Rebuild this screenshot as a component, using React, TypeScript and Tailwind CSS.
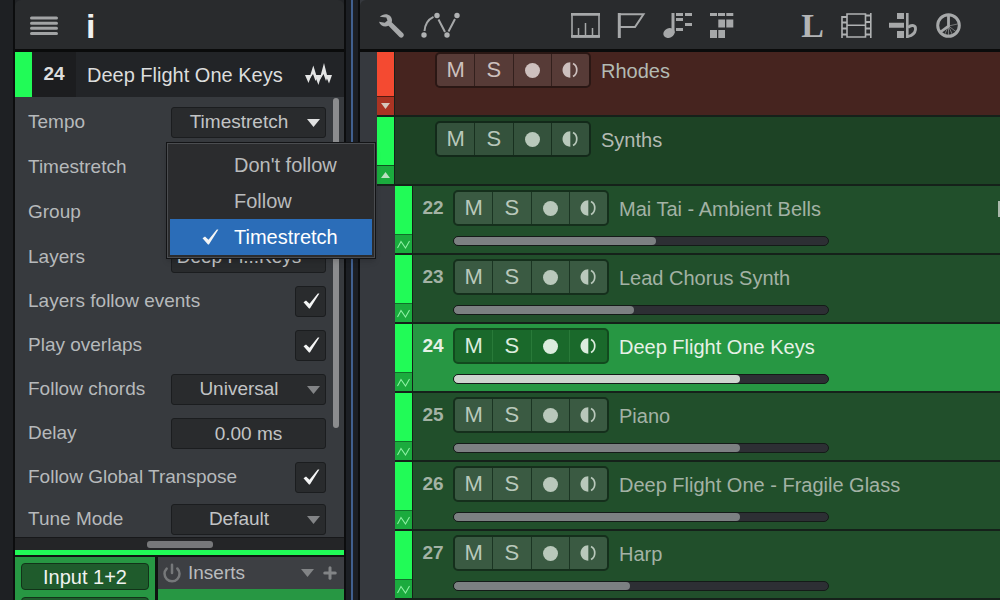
import { useState, type ReactNode } from 'react';
import { Plus, Power } from 'lucide-react';
import clsx from 'clsx';

type Track = {
  id: number;
  name: string;
  level: number;
};

const TEMPO_MODES = ["Don't follow", 'Follow', 'Timestretch'];

const TRACKS: Track[] = [
  { id: 22, name: 'Mai Tai - Ambient Bells', level: 53 },
  { id: 23, name: 'Lead Chorus Synth', level: 47 },
  { id: 24, name: 'Deep Flight One Keys', level: 76 },
  { id: 25, name: 'Piano', level: 76 },
  { id: 26, name: 'Deep Flight One - Fragile Glass', level: 76 },
  { id: 27, name: 'Harp', level: 46 },
];

/* ---------- Icons ---------- */

function MenuIcon() {
  return (
    <svg width="28" height="20" viewBox="0 0 28 20" stroke="#a2a4a5" strokeWidth="3" strokeLinecap="round">
      <path d="M1.5 2h25M1.5 7.2h25M1.5 12.3h25M1.5 17.4h25" />
    </svg>
  );
}

function WaveIcon() {
  return (
    <svg width="28" height="24" viewBox="0 0 28 24" fill="#e4e5e5">
      <path d="M0 12h6.500L3.500 20z" />
      <path d="M3.600 17.500L8.300 2.500l3.700 12-1.500 3.500-2.500-7z" />
      <path d="M9.500 12h6.800l-2.800 10z" />
      <path d="M14 18.500L19 0l3.500 14-1.500 4-2.500-7z" />
      <path d="M20.500 12H27l-3 8.500z" />
    </svg>
  );
}

function WrenchIcon() {
  return (
    <svg width="25" height="25" viewBox="0 0 25 25" fill="#a6a8a9">
      <path d="M.8 3.800C5-.8 12.800.8 13 7.300c0 .8-.1 1.400-.3 2l11.400 11c2.200 2.500-1.100 5.900-3.600 3.700L9.500 12.800C5.800 14.600 1.200 13 0 8.800l5.800 1L8.500 7.500 7.300 4.600z" />
    </svg>
  );
}

function CurveIcon() {
  return (
    <svg width="39" height="27" viewBox="0 0 39 27" fill="none" stroke="#a6a8a9" strokeWidth="2">
      <path d="M3.500 19C4 12 8 7 12.500 4.800M17.500 7.500l6.500 12.500M27.500 19.500l6.500-12.500" />
      <g fill="#b0b2b3" stroke="none">
        <circle cx="3" cy="23" r="2.700" />
        <circle cx="16" cy="3.500" r="2.700" />
        <circle cx="26" cy="23" r="2.700" />
        <circle cx="36" cy="3.500" r="2.700" />
      </g>
    </svg>
  );
}

function RulerIcon() {
  return (
    <svg width="29" height="25" viewBox="0 0 29 25" fill="none" stroke="#a6a8a9">
      <rect x="1" y="1" width="27" height="23" strokeWidth="1.600" />
      <path d="M0 1.400h29M0 23.300h29" strokeWidth="2.600" />
      <path d="M7.500 22v-7M14.500 22V10M21.500 22v-7" strokeWidth="1.500" />
    </svg>
  );
}

function FlagIcon() {
  return (
    <svg width="29" height="25" viewBox="0 0 29 25" fill="none" stroke="#a6a8a9">
      <path d="M2.300 0v25" strokeWidth="3" />
      <path d="M2 1.200h24.500L18 14H2" strokeWidth="2" />
    </svg>
  );
}

function NoteIcon() {
  return (
    <svg width="30" height="25" viewBox="0 0 30 25" fill="#a6a8a9">
      <path d="M8.500 0h3v20h-3z" />
      <ellipse cx="6" cy="20" rx="5.800" ry="4.800" transform="rotate(-25 6 20)" />
      <path d="M13 0h7v3h-7zM22 0h7v3h-7zM13 5h7v3h-7zM22 10h7v3h-7zM13 15h7v3h-7z" />
    </svg>
  );
}

function GridIcon() {
  return (
    <svg width="24" height="25" viewBox="0 0 24 25" fill="#a6a8a9">
      <path d="M0 0h7v3H0zM8 0h7v3H8zM16.300 0h7v3h-7zM8.300 6.500h6.700v8H8.300zM16.300 6.500h7v8h-7zM0 17h7v8H0zM8.300 17h6.700v8H8.300z" />
    </svg>
  );
}

function FilmIcon() {
  return (
    <svg width="31" height="25" viewBox="0 0 31 25" fill="none" stroke="#b0b2b3" strokeWidth="1.600">
      <path d="M6 1h18.500v23H6zM6 12.300h18.500" />
      <path d="M1 3v22M29.800 0v25" />
      <path d="M1 4h5M1 9.500h5M1 15.500h5M1 21.500h5M24.500 2.500h5M24.500 9h5M24.500 15.500h5M24.500 21.500h5" strokeWidth="2.200" />
    </svg>
  );
}

function FlatIcon() {
  return (
    <svg width="30" height="25" viewBox="0 0 30 25" fill="#a6a8a9">
      <path d="M8 0h7v6H8zM0 9.700h15v5H0zM8 18h7v7H8zM17 0h2.600v25H17z" />
      <path d="M19 14.500c4-3.500 8-2 7.500 2-.4 3.500-3.500 6-7.500 7" fill="none" stroke="#a6a8a9" strokeWidth="2.800" />
    </svg>
  );
}

function WheelIcon() {
  return (
    <svg width="25" height="25" viewBox="0 0 25 25" fill="none" stroke="#a6a8a9">
      <circle cx="12.500" cy="12.500" r="10.800" strokeWidth="3" />
      <path d="M12.500 2v11L4.500 19" strokeWidth="2.800" />
      <path d="M12.500 13l8 6M12.500 13l9-2M12.500 13v10M12.500 13l-4 9M12.500 13l4 9" strokeWidth="1" opacity="0.6" />
    </svg>
  );
}

function MonitorIcon() {
  return (
    <svg width="16" height="16" viewBox="0 0 16 16">
      <path d="M8.300 .3v15.400C4 15.700 .5 12.300 .5 8S4 .3 8.300 .3z" fill="currentColor" />
      <path d="M11 1.500c5 2.500 5 10.500 0 13" fill="none" stroke="currentColor" strokeWidth="1.700" />
    </svg>
  );
}

function CheckIcon({ className }: { className?: string }) {
  return (
    <svg width="17" height="16" viewBox="0 0 17 16" className={className} fill="#f4f5f5">
      <path d="M.5 9.300L3 7.400l3.500 3.300L14.800.6h1.600L6.900 15.400H6z" />
    </svg>
  );
}

function Triangle({ className }: { className?: string }) {
  return (
    <svg width="13" height="8" viewBox="0 0 13 8" className={className} fill="currentColor">
      <path d="M0 0h13L6.500 8z" />
    </svg>
  );
}

/* ---------- Inspector ---------- */

const BOX = 'rounded-[3px] border border-[#1b1d1f] bg-[#292b2d]';

function Field({ label, id, children }: { label: string; id?: string; children?: ReactNode }) {
  return (
    <div className="flex h-[31px] items-center justify-between">
      <label htmlFor={id}>{label}</label>
      {children}
    </div>
  );
}

function SelectBox({ id, options, value, active, arrow = true, onChange }: {
  id: string;
  options: string[];
  value?: string;
  active?: boolean;
  arrow?: boolean;
  onChange?: (value: string) => void;
}) {
  return (
    <div className="relative w-[155px]">
      <select
        id={id}
        value={value ?? options[0]}
        onChange={(e) => onChange?.(e.target.value)}
        className={clsx(BOX, 'block h-[31px] w-full appearance-none pr-[19px] text-center text-[#c2c4c5] outline-none')}
      >
        {options.map((option) => (
          <option key={option}>{option}</option>
        ))}
      </select>
      {arrow && (
        <Triangle
          className={clsx('pointer-events-none absolute top-3 right-1.5', active ? 'text-[#e0e1e1]' : 'text-[#828486]')}
        />
      )}
    </div>
  );
}

function CheckBox({ id }: { id: string }) {
  const [checked, setChecked] = useState(true);

  return (
    <div className="relative size-[31px]">
      <input
        id={id}
        type="checkbox"
        checked={checked}
        onChange={(e) => setChecked(e.target.checked)}
        className={clsx(BOX, 'block size-full appearance-none')}
      />
      {checked && <CheckIcon className="pointer-events-none absolute top-[7px] left-[8px]" />}
    </div>
  );
}

function TempoMenu({ value, onSelect }: { value: string; onSelect: (value: string) => void }) {
  return (
    <ul
      role="listbox"
      aria-label="Tempo"
      className="absolute top-[35px] -left-[5px] z-10 w-[210px] border border-[#131416] bg-[#2b2c2e] px-[3px] pt-1 pb-[3px] text-[20px] text-[#b9bbbc] shadow-md inset-ring inset-ring-[#4b4d50]"
    >
      {TEMPO_MODES.map((mode) => (
        <li key={mode} role="option" aria-selected={mode === value}>
          <button
            type="button"
            onClick={() => onSelect(mode)}
            className={clsx(
              'flex h-9 w-full items-center pl-8 text-left whitespace-nowrap',
              mode === value && 'bg-[#2b6db8] text-white',
            )}
          >
            <span className="w-8">{mode === value && <CheckIcon />}</span>
            {mode}
          </button>
        </li>
      ))}
    </ul>
  );
}

function Inspector() {
  const [tempo, setTempo] = useState('Timestretch');

  return (
    <aside className="flex w-[333px] shrink-0 flex-col border-x-2 border-[#0c0d0e] bg-[#222427]">
      <div className="flex h-[52px] shrink-0 items-center gap-7 rounded-t-md border-b-[3px] border-[#0a0b0b] bg-[#292b2d] pt-[2px] pl-[15px]">
        <button type="button" aria-label="Menu">
          <MenuIcon />
        </button>
        <button type="button" className="text-[34px] leading-none font-bold text-[#f0f1f1]">
          i
        </button>
      </div>

      <div className="flex h-[45px] shrink-0 items-center text-[20px] text-[#dcdddd]">
        <span className="h-full w-[17px] bg-[#21fb57]" />
        <span className="flex h-full w-11 items-center justify-center bg-[#1c1d1f] text-[19px] font-bold">24</span>
        <h2 className="flex-1 pl-[11px] whitespace-nowrap">Deep Flight One Keys</h2>
        <span className="pr-[11px]">
          <WaveIcon />
        </span>
      </div>

      <div className="flex shrink-0 bg-[#373a3e] pb-[2px] text-[19px] text-[#b6b9bb]">
        <form className="flex flex-1 flex-col gap-[13px] pt-[10px] pl-[13px]">
          <div className="flex flex-col gap-[14px]">
            <Field label="Tempo" id="tempo">
              <div className="relative">
                <SelectBox id="tempo" options={TEMPO_MODES} value={tempo} active onChange={setTempo} />
                <TempoMenu value={tempo} onSelect={setTempo} />
              </div>
            </Field>
            <Field label="Timestretch" />
            <Field label="Group" />
            <Field label="Layers" id="layers">
              <SelectBox id="layers" options={['Deep Fl...Keys']} arrow={false} />
            </Field>
          </div>
          <Field label="Layers follow events" id="layers-follow">
            <CheckBox id="layers-follow" />
          </Field>
          <Field label="Play overlaps" id="overlaps">
            <CheckBox id="overlaps" />
          </Field>
          <Field label="Follow chords" id="chords">
            <SelectBox id="chords" options={['Universal']} />
          </Field>
          <Field label="Delay" id="delay">
            <input
              id="delay"
              defaultValue="0.00 ms"
              className={clsx(BOX, 'h-[31px] w-[155px] text-center text-[#c2c4c5] outline-none')}
            />
          </Field>
          <div className="flex flex-col gap-[11px]">
            <Field label="Follow Global Transpose" id="transpose">
              <CheckBox id="transpose" />
            </Field>
            <Field label="Tune Mode" id="tune">
              <SelectBox id="tune" options={['Default']} />
            </Field>
          </div>
        </form>
        <div className="w-[18px] pt-px pl-[7px]">
          <div className="h-[330px] w-[6px] rounded-full bg-[#8b8c8e]" />
        </div>
      </div>

      <div className="flex h-[13px] shrink-0 items-center justify-center border-t border-[#17181a] bg-[#242527]">
        <div className="h-[7px] w-[66px] rounded-[3px] bg-[#77787a]" />
      </div>
      <div className="h-[7px] shrink-0 border-b-2 border-[#111513] bg-[#21fb57]" />

      <div className="flex min-h-0 flex-1 overflow-hidden bg-[#0e1210] text-[#f0f2f0]">
        <div className="mr-[3px] flex w-[140px] flex-col gap-[7px] bg-[#279743] px-[6px] pt-[6px]">
          <button
            type="button"
            className="h-[27px] shrink-0 rounded border border-[#123319] bg-[#1f5b2c] text-[20px] leading-none"
          >
            Input 1+2
          </button>
          <button
            type="button"
            aria-label="Output"
            className="h-[27px] shrink-0 rounded border border-[#123319] bg-[#1f5b2c]"
          />
        </div>
        <div className="flex-1 bg-[#279743]">
          <div className="flex h-8 items-center bg-[#3d3f43] pr-[5px] pl-1 text-[19px] text-[#b9bbbd]">
            <button type="button" aria-label="Bypass inserts" className="text-[#76787a]">
              <Power size={20} strokeWidth={3} />
            </button>
            <span className="pl-1.5">Inserts</span>
            <button type="button" aria-label="Insert presets" className="ml-auto text-[#828486]">
              <Triangle />
            </button>
            <button type="button" aria-label="Add insert" className="pl-[7px] text-[#828486]">
              <Plus size={18} strokeWidth={4} />
            </button>
          </div>
        </div>
      </div>
    </aside>
  );
}

/* ---------- Track list ---------- */

function TrackButtons({ className }: { className: string }) {
  return (
    <div
      className={clsx(
        'flex h-9 w-[156px] shrink-0 divide-x rounded-[5px] border-2 text-[22px] leading-none *:flex *:flex-1 *:items-center *:justify-center',
        className,
      )}
    >
      <button type="button">M</button>
      <button type="button">S</button>
      <button type="button" aria-label="Record">
        <span className="size-[15px] rounded-full bg-current" />
      </button>
      <button type="button" aria-label="Monitor">
        <MonitorIcon />
      </button>
    </div>
  );
}

function FolderRow({ name, open, className, stripClass, footClass, buttonClass }: {
  name: string;
  open?: boolean;
  className: string;
  stripClass: string;
  footClass: string;
  buttonClass: string;
}) {
  return (
    <div className="flex h-[69px] shrink-0 pl-[17px]">
      <div className={clsx('flex w-[18px] flex-col border-r border-b-2 border-[#15211a]', stripClass)}>
        <button
          type="button"
          aria-label={open ? 'Close folder' : 'Open folder'}
          className={clsx('mt-auto flex h-[19px] items-center justify-center border-t border-black/50', footClass)}
        >
          <svg width="9" height="6" viewBox="0 0 9 6" fill="#e2ece2" opacity="0.8">
            <path d={open ? 'M0 6L4.500 0 9 6z' : 'M0 0h9L4.500 6z'} />
          </svg>
        </button>
      </div>
      <div className={clsx('flex flex-1 items-start gap-[10px] border-b-2 border-[#15211a] pt-1 pl-[40px]', className)}>
        <TrackButtons className={buttonClass} />
        <span className="leading-[38px] text-[#b3bab3]">{name}</span>
      </div>
    </div>
  );
}

function TrackRow({ track, selected, onSelect }: { track: Track; selected: boolean; onSelect: () => void }) {
  const [level, setLevel] = useState(track.level);
  const fill = selected ? '#ced5cf' : '#7c8082';
  const stop = `calc((100% - 8px) * ${level / 100} + 4px)`;

  return (
    <div className="flex h-[69px] shrink-0 pl-[35px]" onClick={onSelect}>
      <div className="flex w-[18px] flex-col border-r border-b-2 border-[#15211a] bg-[#21fb57]">
        <div className="mt-auto flex h-[19px] items-center justify-center border-t border-[#11702a] bg-[#1bab3e]">
          <svg width="13" height="9" viewBox="0 0 13 9" fill="none" stroke="#8df0a3" strokeWidth="1.100">
            <path d="M.5 8L4 1.500 8.500 8 12.500 1" />
          </svg>
        </div>
      </div>
      <div
        className={clsx(
          'flex flex-1 border-b-2 border-[#15211a] pt-1',
          selected ? 'bg-[#279743] text-[#e6f1e7]' : 'bg-[#214f2b] text-[#a3b2a5]',
        )}
      >
        <span className="w-10 text-center text-[19px] leading-9 font-bold">{track.id}</span>
        <div className="flex flex-col gap-[10px]">
          <div className="flex h-9 gap-[10px]">
            <TrackButtons
              className={
                selected
                  ? 'divide-[#297a39] border-[#124a1e] bg-[#1a692b] text-[#dcecde]'
                  : 'divide-[#1b3523] border-[#152f1c] bg-[#3a5a42] text-[#b9c8bb]'
              }
            />
            <span className="leading-[38px] whitespace-nowrap">{track.name}</span>
          </div>
          <input
            type="range"
            aria-label={`${track.name} volume`}
            value={level}
            onChange={(e) => setLevel(Number(e.target.value))}
            style={{ backgroundImage: `linear-gradient(to right, ${fill} ${stop}, transparent ${stop})`, color: fill }}
            className="block h-[10px] w-[376px] appearance-none rounded-full border border-[#141b18] bg-[#2d2f34] [&::-webkit-slider-thumb]:size-2 [&::-webkit-slider-thumb]:appearance-none [&::-webkit-slider-thumb]:rounded-full [&::-webkit-slider-thumb]:bg-current"
          />
        </div>
        {track.id === 22 && <span className="mt-[11px] ml-auto h-4 w-[2px] bg-[#a9b8ab]" />}
      </div>
    </div>
  );
}

function Toolbar() {
  return (
    <div className="flex h-[52px] shrink-0 items-center rounded-tl-md border-b-[3px] border-[#0a0b0b] bg-[#292b2d] pt-[2px] pl-[19px]">
      <div className="flex items-center gap-[17px]">
        <button type="button" aria-label="Track list options"><WrenchIcon /></button>
        <button type="button" aria-label="Automation"><CurveIcon /></button>
      </div>
      <div className="ml-[111px] flex items-center gap-[17px]">
        <button type="button" aria-label="Ruler"><RulerIcon /></button>
        <button type="button" aria-label="Markers"><FlagIcon /></button>
        <button type="button" aria-label="Signature"><NoteIcon /></button>
        <button type="button" aria-label="Arranger"><GridIcon /></button>
      </div>
      <div className="ml-auto flex items-center gap-[17px] pr-[39px]">
        <button type="button" className="font-['Liberation_Serif',serif] text-[34px] leading-none font-bold text-[#b3b5b6]">
          L
        </button>
        <button type="button" aria-label="Video"><FilmIcon /></button>
        <button type="button" aria-label="Chords"><FlatIcon /></button>
        <button type="button" aria-label="Tempo track"><WheelIcon /></button>
      </div>
    </div>
  );
}

export default function App() {
  const [selectedId, setSelectedId] = useState(24);

  return (
    <div className="flex h-screen overflow-hidden bg-[#1e2023] pl-[13px] font-['Liberation_Sans',Arial,sans-serif]">
      <Inspector />

      {/* Splitter */}
      <div className="flex w-[14px] shrink-0 justify-center border-r-2 border-[#0c0d0e] bg-[#1c1f24]">
        <div className="w-[2px] bg-[#41608f]" />
      </div>

      <main className="flex min-w-0 flex-1 flex-col bg-[#36393e] text-[20px]">
        <Toolbar />
        <div className="flex min-h-0 flex-1 flex-col overflow-hidden">
          <div className="-mt-1 flex flex-col">
            <FolderRow
              name="Rhodes"
              className="bg-[#46241f]"
              stripClass="bg-[#f44a31]"
              footClass="bg-[#aa3423]"
              buttonClass="divide-[#33201d] border-[#2a1714] bg-[#573b37] text-[#cdc0be]"
            />
            <FolderRow
              name="Synths"
              open
              className="bg-[#1d4325]"
              stripClass="bg-[#21fb57]"
              footClass="bg-[#1bab3e]"
              buttonClass="divide-[#18301f] border-[#13291a] bg-[#34523c] text-[#b9c8bb]"
            />
            {TRACKS.map((track) => (
              <TrackRow
                key={track.id}
                track={track}
                selected={track.id === selectedId}
                onSelect={() => setSelectedId(track.id)}
              />
            ))}
          </div>
        </div>
      </main>
    </div>
  );
}
